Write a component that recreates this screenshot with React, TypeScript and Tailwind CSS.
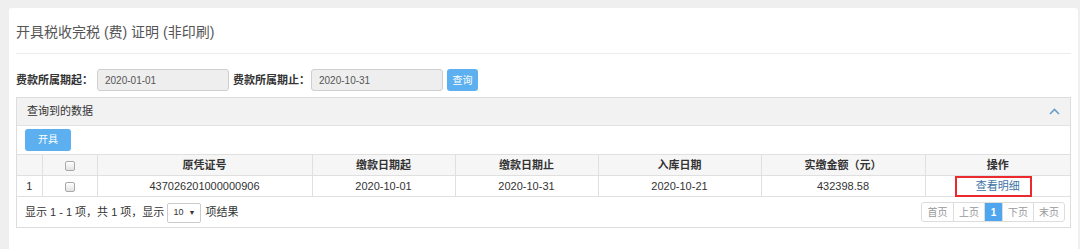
import React from "react";

const FONT = { fontFamily: '"Liberation Sans", "Noto Sans CJK SC", sans-serif' };

function Checkbox() {
  return (
    <span className="inline-block h-[10px] w-[10px] rounded-[2px] border border-[#a9a9a9] bg-gradient-to-b from-white to-[#e2e2e2] align-middle" />
  );
}

function DateInput({ value }: { value: string }) {
  return (
    <div className="flex h-[22px] w-[132px] items-center rounded-[3px] border border-[#cfcfcf] bg-[#eeeeee] pl-[7px] text-[10px] text-[#555]">
      {value}
    </div>
  );
}

function ChevronUpIcon() {
  return (
    <svg width="11" height="7" viewBox="0 0 11 7" fill="none">
      <polyline points="1,6 5.5,1.5 10,6" stroke="#6b9dcc" strokeWidth="1.6" />
    </svg>
  );
}

const columns = [
  { label: "", width: "w-[25px]" },
  { label: "check", width: "w-[55px]" },
  { label: "原凭证号", width: "w-[215px]" },
  { label: "缴款日期起", width: "w-[143px]" },
  { label: "缴款日期止", width: "w-[143px]" },
  { label: "入库日期", width: "w-[163px]" },
  { label: "实缴金额（元）", width: "w-[164px]" },
  { label: "操作", width: "w-[145px]" },
];

const row = ["1", "check", "437026201000000906", "2020-10-01", "2020-10-31", "2020-10-21", "432398.58"];

const pages = ["首页", "上页", "1", "下页", "末页"];

export default function App() {
  return (
    <div className="h-[249px] overflow-hidden bg-[#efefef] pl-[9px] pr-[2px] pt-[8px]" style={FONT}>
      <div className="h-[260px] rounded-[3px] bg-white px-[7px] pt-[14px]">
        {/* 标题 */}
        <h1 className="h-[20px] text-[14px] leading-[20px] text-[#555]">开具税收完税 (费) 证明 (非印刷)</h1>
        <div className="mt-[11px] border-t border-[#ececec]" />

        {/* 查询条件 */}
        <div className="mt-[15px] flex items-center">
          <span className="w-[81px] text-[11px] font-bold text-[#333]">费款所属期起：</span>
          <DateInput value="2020-01-01" />
          <span className="ml-[4px] w-[78px] text-[11px] font-bold text-[#333]">费款所属期止：</span>
          <DateInput value="2020-10-31" />
          <button className="ml-[4px] h-[22px] w-[31px] rounded-[3px] bg-[#5cb0f0] text-[10px] text-white">
            查询
          </button>
        </div>

        {/* 数据面板 */}
        <div className="mt-[6px] border border-[#dddddd]">
          <div className="flex h-[28px] items-center justify-between border-b border-[#e3e3e3] bg-[#f2f2f2] pl-[10px] pr-[10px]">
            <span className="text-[11px] text-[#333]">查询到的数据</span>
            <ChevronUpIcon />
          </div>

          <div className="flex pl-[8px] pt-[3px]">
            <button className="h-[22px] w-[46px] rounded-[3px] bg-[#5cb0f0] text-[10px] leading-[22px] text-white">
              开具
            </button>
          </div>

          <table className="mt-[3px] w-full table-fixed border-collapse text-[11px] text-[#333]">
            <colgroup>
              {columns.map((c, i) => (
                <col key={i} className={c.width} />
              ))}
            </colgroup>
            <thead>
              <tr className="bg-[#f6f6f6]">
                {columns.map((c, i) => (
                  <th
                    key={i}
                    className={`h-[21px] border-t border-b border-[#e0e0e0] p-0 text-center font-bold leading-[20px] ${
                      i < columns.length - 1 ? "border-r" : ""
                    }`}
                  >
                    {c.label === "check" ? <Checkbox /> : c.label}
                  </th>
                ))}
              </tr>
            </thead>
            <tbody>
              <tr>
                {row.map((v, i) => (
                  <td key={i} className="h-[21px] border-r border-b border-[#e0e0e0] p-0 text-center leading-[20px]">
                    {v === "check" ? <Checkbox /> : v}
                  </td>
                ))}
                <td className="relative h-[21px] border-b border-[#e0e0e0] p-0 text-center leading-[20px]">
                  <a className="text-[#3d73a6]">查看明细</a>
                  <span className="absolute top-0 left-[29px] h-[21px] w-[77px] border-2 border-[#ec2a2e]" />
                </td>
              </tr>
            </tbody>
          </table>

          {/* 分页 */}
          <div className="flex h-[30px] items-center justify-between pl-[8px] pr-[5px]">
            <div className="flex items-center text-[11px] text-[#333]">
              <span className="whitespace-pre">显示 1 - 1 项，共 1 项，显示 </span>
              <div className="mt-[2px] flex h-[20px] w-[34px] items-center justify-between rounded-[2px] border border-[#cccccc] bg-white pl-[5px] pr-[5px] text-[9px]">
                <span>10</span>
                <span className="text-[7px]">▼</span>
              </div>
              <span className="ml-[4px]">项结果</span>
            </div>
            <div className="flex h-[20px] overflow-hidden rounded-[3px] border border-[#dddddd] text-[10px] text-[#999]">
              {pages.map((p, i) => (
                <span
                  key={p}
                  className={`flex items-center justify-center ${i > 0 ? "border-l border-[#dddddd]" : ""} ${
                    p === "1" ? "w-[18px] bg-[#4ea6ee] font-bold text-white" : "w-[31px]"
                  }`}
                >
                  {p}
                </span>
              ))}
            </div>
          </div>
        </div>
      </div>
    </div>
  );
}
